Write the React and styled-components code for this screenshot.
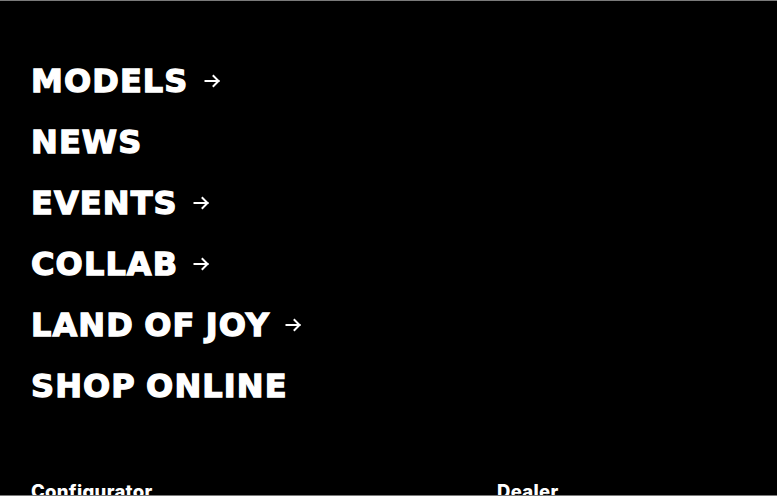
import React from "react";
import styled, { createGlobalStyle } from "styled-components";

const Global = createGlobalStyle`
  html, body { margin: 0; padding: 0; background: #000; }
  body { overflow: hidden; }
`;

const Page = styled.div`
  box-sizing: border-box;
  height: 496px;
  background: #000;
  border-top: 1px solid #7a7a7a;
  border-bottom: 1px solid #7a7a7a;
  overflow: hidden;
  display: flex;
  flex-direction: column;
`;

const Nav = styled.nav`
  display: flex;
  flex-direction: column;
  padding: 50px 0 0 31px;
`;

const NavItem = styled.a`
  display: flex;
  align-items: center;
  gap: 15px;
  height: 61px;
  color: #fff;
  text-decoration: none;
  font-family: "DejaVu Sans", sans-serif;
  font-weight: 700;
  font-size: 32px;
  letter-spacing: 1.1px;
  word-spacing: -2px;
  line-height: 61px;
  -webkit-text-stroke: 1.3px #fff;
`;

const Arrow = styled.svg`
  width: 17px;
  height: 14px;
  flex: none;
  margin-top: -2px;
`;

const Footer = styled.div`
  display: grid;
  grid-template-columns: 466px 1fr;
  padding: 63px 0 0 31px;
`;

const FooterLink = styled.a`
  color: #fff;
  text-decoration: none;
  font-family: Inter, "Liberation Sans", sans-serif;
  font-weight: 800;
  font-size: 18.5px;
  letter-spacing: 0.3px;
  line-height: 22px;
`;

const ArrowIcon = () => (
  <Arrow viewBox="0 0 17 14" fill="none" stroke="#fff" strokeWidth="2" strokeLinecap="square">
    <path d="M1.5 7h13" />
    <path d="M9.5 2l5 5-5 5" />
  </Arrow>
);

const items = [
  { label: "MODELS", arrow: true },
  { label: "NEWS", arrow: false },
  { label: "EVENTS", arrow: true },
  { label: "COLLAB", arrow: true },
  { label: "LAND OF JOY", arrow: true },
  { label: "SHOP ONLINE", arrow: false },
];

export default function App() {
  return (
    <>
      <Global />
      <Page>
        <Nav>
          {items.map((it) => (
            <NavItem key={it.label} href="#">
              <span>{it.label}</span>
              {it.arrow && <ArrowIcon />}
            </NavItem>
          ))}
        </Nav>
        <Footer>
          <FooterLink href="#">Configurator</FooterLink>
          <FooterLink href="#">Dealer</FooterLink>
        </Footer>
      </Page>
    </>
  );
}
